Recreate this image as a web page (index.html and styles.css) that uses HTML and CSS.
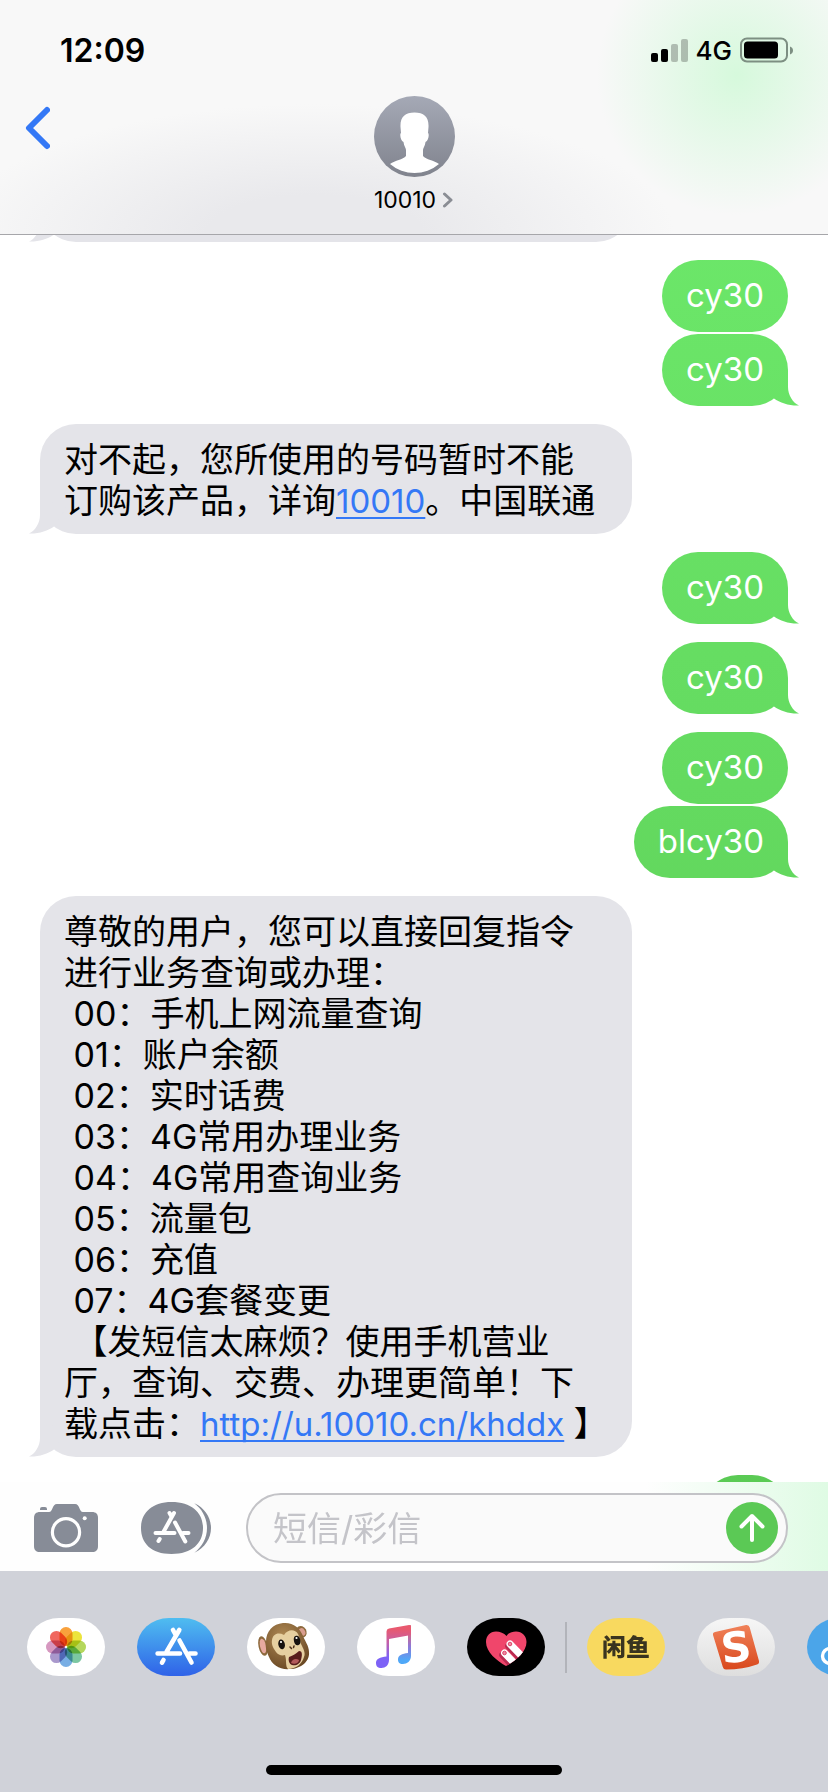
FILE: index.html
```html
<!DOCTYPE html>
<html lang="zh-CN">
<head>
<meta charset="utf-8">
<meta name="viewport" content="width=device-width, initial-scale=1">
<title>10010</title>
<link rel="stylesheet" href="styles.css">
</head>
<body>
<div class="screen">
  <header class="header">
    <div class="status">
      <time class="clock">12:09</time>
      <div class="status-icons">
        <svg class="signal" width="37" height="24" viewBox="0 0 37 24" role="img" aria-label="信号">
          <rect x="0" y="15" width="7" height="9" rx="2"/>
          <rect x="10" y="11" width="7" height="13" rx="2"/>
          <rect x="20" y="6" width="7" height="18" rx="2" opacity=".24"/>
          <rect x="30" y="1" width="7" height="23" rx="2" opacity=".24"/>
        </svg>
        <span class="network">4G</span>
        <svg class="battery" width="54" height="26" viewBox="0 0 54 26" role="img" aria-label="电池">
          <rect x="1" y="1.5" width="46" height="23" rx="6" fill="none" stroke="#7d8f82" stroke-width="2"/>
          <rect x="4" y="4.500" width="34" height="17" rx="3.500"/>
          <path d="M50 9.500c4 1.200 4 6.800 0 8z" fill="#7d8f82"/>
        </svg>
      </div>
    </div>
    <nav class="nav">
      <button class="back" type="button" aria-label="返回">
        <svg width="26" height="44" viewBox="0 0 26 44"><path d="M23 4 5 22l18 18" fill="none" stroke="#3478f6" stroke-width="6" stroke-linecap="round" stroke-linejoin="round"/></svg>
      </button>
      <button class="contact" type="button">
        <svg class="avatar" width="81" height="81" viewBox="0 0 81 81" aria-hidden="true">
          <defs><linearGradient id="av" x1="0" y1="0" x2="0" y2="1"><stop offset="0" stop-color="#a5a9b6"/><stop offset="1" stop-color="#80838d"/></linearGradient></defs>
          <circle cx="40.500" cy="40.500" r="40.500" fill="url(#av)"/>
          <path fill="#fff" d="M40.500 16.500C31 16.500 26 21 26.500 31l.5 6c-1.500 1-.5 7.500 2.500 9 .4 4 2.500 6 2.500 8v6c-3 3.500-11 4.500-16 8a37.500 37.500 0 0 0 49 0c-5-3.500-13-4.500-16-8v-6c0-2 2.100-4 2.500-8 3-1.500 4-8 2.500-9l.5-6c.5-10-4.500-14.500-14-14.500z"/>
        </svg>
        <span class="contact-name">10010
          <svg width="12" height="16" viewBox="0 0 12 16" aria-hidden="true"><path d="m2.500 2 6.500 6-6.500 6" fill="none" stroke="#8a8d94" stroke-width="3" stroke-linecap="round" stroke-linejoin="round"/></svg>
        </span>
      </button>
    </nav>
  </header>

  <main class="thread">
    <div class="msg msg-in msg-tail msg-earlier" aria-hidden="true"></div>
    <p class="msg msg-out group-start">cy30</p>
    <p class="msg msg-out msg-tail">cy30</p>
    <p class="msg msg-in msg-tail group-start">对不起，您所使用的号码暂时不能
订购该产品，详询<a href="tel:10010">10010</a>。中国联通</p>
    <p class="msg msg-out msg-tail group-start">cy30</p>
    <p class="msg msg-out msg-tail group-start">cy30</p>
    <p class="msg msg-out group-start">cy30</p>
    <p class="msg msg-out msg-tail">blcy30</p>
    <p class="msg msg-in msg-tail group-start">尊敬的用户，您可以直接回复指令
进行业务查询或办理：
 00：手机上网流量查询
 01：账户余额
 02：实时话费
 03：4G常用办理业务
 04：4G常用查询业务
 05：流量包
 06：充值
 07：4G套餐变更
 【发短信太麻烦？使用手机营业
厅，查询、交费、办理更简单！下
载点击：<a href="http://u.10010.cn/khddx">http://u.10010.cn/khddx</a> 】</p>
    <div class="msg msg-out group-start msg-later" aria-hidden="true"></div>
  </main>

  <footer class="footer">
    <form class="composer">
      <button class="tool" type="button" aria-label="相机">
        <svg width="64" height="48" viewBox="0 0 64 48"><path fill="#878c97" d="M6 6V5q0-2 2-2h3q2 0 2 2v1zM6 8h9c4 0 3-8 8-8h18c5 0 4 8 8 8h9c4 0 6 2 6 6v28c0 4-2 6-6 6H6c-4 0-6-2-6-6V14c0-4 2-6 6-6z"/><circle cx="32" cy="28.300" r="13.600" fill="none" stroke="#fff" stroke-width="3.200"/><circle cx="50.700" cy="14.300" r="2" fill="#fff"/></svg>
      </button>
      <button class="tool tool-apps" type="button" aria-label="应用">
        <svg width="70" height="52" viewBox="0 0 70 52"><path fill="#878c97" d="M30.500 0C51 0 62 11 62 26S51 52 30.500 52 0 41 0 26 11 0 30.500 0zM53.300 1.300C64 6 70 16 70 26S64 46 53.300 50.700C61 45 66 36 66 26S61 7 53.300 1.300z"/><path fill="none" stroke="#fff" stroke-width="4" stroke-linecap="round" d="M14.500 31h19M42 31h5.500M33 11 22.700 29.500M28.500 11l2 3.500M34 20.500l10.300 19M18.700 37l-1.200 2"/></svg>
      </button>
      <div class="field">
        <input class="input" type="text" placeholder="短信/彩信" aria-label="短信/彩信">
        <button class="send" type="submit" aria-label="发送">
          <svg width="52" height="52" viewBox="0 0 52 52"><path d="M26 38V14M15.500 24.500 26 14l10.500 10.500" fill="none" stroke="#fff" stroke-width="4" stroke-linecap="round" stroke-linejoin="round"/></svg>
        </button>
      </div>
    </form>

    <div class="apps">
      <button class="app" type="button" aria-label="照片">
        <svg width="78" height="58" viewBox="0 0 78 58"><g class="petals" transform="translate(39 29)">
          <rect x="-6.500" y="-20" width="13" height="19" rx="6.500" fill="#f9a13c"/>
          <rect x="-6.500" y="-20" width="13" height="19" rx="6.500" fill="#ece43c" transform="rotate(45)"/>
          <rect x="-6.500" y="-20" width="13" height="19" rx="6.500" fill="#b4d75c" transform="rotate(90)"/>
          <rect x="-6.500" y="-20" width="13" height="19" rx="6.500" fill="#7cc7a2" transform="rotate(135)"/>
          <rect x="-6.500" y="-20" width="13" height="19" rx="6.500" fill="#78aee4" transform="rotate(180)"/>
          <rect x="-6.500" y="-20" width="13" height="19" rx="6.500" fill="#a998cc" transform="rotate(225)"/>
          <rect x="-6.500" y="-20" width="13" height="19" rx="6.500" fill="#d698c0" transform="rotate(270)"/>
          <rect x="-6.500" y="-20" width="13" height="19" rx="6.500" fill="#f0675f" transform="rotate(315)"/>
        </g></svg>
      </button>
      <button class="app app-store" type="button" aria-label="App Store">
        <svg width="78" height="58" viewBox="0 0 78 58"><path fill="none" stroke="#fff" stroke-width="4.600" stroke-linecap="round" d="M20.600 35.500H43M52.500 35.500h6M42.300 12 29.500 34M36 12l2.500 4.500M42.500 22.500l12 22M26.500 42l-1.500 2.700"/></svg>
      </button>
      <button class="app" type="button" aria-label="拟我表情">
        <svg width="78" height="58" viewBox="0 0 78 58">
          <defs><radialGradient id="fur" cx=".4" cy=".3" r=".75"><stop offset="0" stop-color="#b08a55"/><stop offset="1" stop-color="#694723"/></radialGradient></defs>
          <ellipse cx="16" cy="28" rx="4.500" ry="10" transform="rotate(-12 16 28)" fill="#8d6a3d"/>
          <ellipse cx="16" cy="28" rx="3" ry="7.500" transform="rotate(-12 16 28)" fill="#e7aaa0"/>
          <ellipse cx="54.500" cy="14" rx="5" ry="6" transform="rotate(-30 54 14)" fill="#8d6a3d"/>
          <ellipse cx="55" cy="14.500" rx="3" ry="4" transform="rotate(-30 54 14)" fill="#d99d8e"/>
          <path fill="url(#fur)" d="M36 5c10-1 17 5 20 13 2 5 6 10 6 16 1 9-8 17-19 17-10 1-18-4-21-12-2-5-4-9-3-15C19 13 26 6 36 5z"/>
          <path fill="#e6cfa0" d="M25 22c1-6 6-8 12-5 4-6 11-6 14-1 2 4 2 7 3 10 2 4 5 9 3 13-2 7-8 12-16 12-3-3-1-8-3-14-3 1-7 0-9-3-2-3-5-7-4-12z"/>
          <ellipse cx="34.500" cy="26.500" rx="3.300" ry="5" transform="rotate(-12 34 26)" fill="#17120f"/>
          <ellipse cx="50" cy="22.500" rx="3.200" ry="4.800" transform="rotate(-12 50 22)" fill="#17120f"/>
          <circle cx="34" cy="24" r="1.100" fill="#fff"/><circle cx="49.500" cy="20" r="1.100" fill="#fff"/>
          <path d="m43 29 1.500 1.500M47 28l-.5 1.500" stroke="#4a2c17" stroke-width="1.500" stroke-linecap="round"/>
          <path fill="#571d1c" d="M42 39c3-1 7-3 10-6 4 0 3 5 2 9-1 4-5 6-9 5-3-1-4-5-3-8z"/>
          <path fill="#b25a5b" d="M44 45c1-4 5-5 8-3 0 3-5 5-8 3z"/>
        </svg>
      </button>
      <button class="app" type="button" aria-label="音乐">
        <svg width="78" height="58" viewBox="0 0 78 58">
          <defs><linearGradient id="nl" x1="0" y1="7" x2="0" y2="50" gradientUnits="userSpaceOnUse"><stop offset=".1" stop-color="#e8596f"/><stop offset=".4" stop-color="#c45fa8"/><stop offset=".75" stop-color="#7d62f6"/></linearGradient>
          <linearGradient id="nr" x1="0" y1="7" x2="0" y2="46" gradientUnits="userSpaceOnUse"><stop offset=".2" stop-color="#d9647f"/><stop offset=".55" stop-color="#8d78d8"/><stop offset=".9" stop-color="#4fa8f8"/></linearGradient></defs>
          <path fill="url(#nr)" d="M51 8.500 54 7v31c0 5-4 8-8 8s-5-2-5-4.500c0-4 4-6 10-6.500z"/>
          <path fill="url(#nl)" d="M29.500 13.500q0-2.500 2.500-3L52 7q2-.3 2 1.500V17l-22 4v21c0 5-3.500 8-7.500 8S19 48 19 45c0-4 4-6 10.500-6.500z"/>
        </svg>
      </button>
      <button class="app app-touch" type="button" aria-label="Digital Touch">
        <svg width="78" height="58" viewBox="0 0 78 58">
          <defs><clipPath id="heart"><path d="M39 48C30 43 19 34 19 24c0-6 4-10.500 10-10.500 4 0 8 1.500 10.500 4.500 2-3 5.500-4.500 9.500-4.500 6 0 10.500 4.500 10.500 10.500 0 10-11 19-20.500 24z"/></clipPath></defs>
          <g clip-path="url(#heart)"><path fill="#f0466b" d="M0 0h78v58H0z"/>
          <path d="M42 28 58 45M36 37l16 17" stroke="#b92b50" stroke-width="7.500" stroke-linecap="round"/>
          <path d="m43 26 16 16.500M37.500 35l16 16.500" stroke="#fff" stroke-width="7" stroke-linecap="round"/></g>
          <circle cx="43" cy="26" r="1.800" fill="#ef8da3" stroke="#dd4469"/><circle cx="37.500" cy="35" r="1.800" fill="#ef8da3" stroke="#dd4469"/>
        </svg>
      </button>
      <span class="divider"></span>
      <button class="app app-fish" type="button">闲鱼</button>
      <button class="app app-sogou" type="button" aria-label="搜狗">
        <svg width="78" height="58" viewBox="0 0 78 58">
          <defs><linearGradient id="sg" x1="0" y1="0" x2="0" y2="1"><stop offset="0" stop-color="#f0825a"/><stop offset="1" stop-color="#d9481c"/></linearGradient></defs>
          <path fill="url(#sg)" d="M18 14 49 7q3-.5 3.700 2.500L62 43q.5 2.500-2 3.500-14 5-31 5-2.500 0-3.200-2.500L16 17q-.5-2.500 2-3z"/>
          <text class="sogou-mark" x="39" y="44" text-anchor="middle" transform="rotate(-6 39 29)" fill="#fff">S</text>
        </svg>
      </button>
      <button class="app app-cloud" type="button" aria-label="网盘">
        <svg width="78" height="58" viewBox="0 0 78 58"><circle cx="23" cy="38" r="7.500" fill="none" stroke="#fff" stroke-width="3.400"/></svg>
      </button>
    </div>
    <div class="home"></div>
  </footer>
</div>
</body>
</html>
```
FILE: styles.css
```css
* {
  box-sizing: border-box;
}

body {
  margin: 0;
  background: #fff;
  color: #000;
  font-family: Inter, "Noto Sans CJK SC", sans-serif;
  font-size: 34px;
  line-height: 41px;
}

button {
  padding: 0;
  border: 0;
  background: none;
  color: inherit;
  font: inherit;
}

svg {
  display: block;
}

.screen {
  display: grid;
  grid-template-columns: minmax(0, 1fr);
  grid-template-rows: auto minmax(0, 1fr) auto;
  height: 100vh;
  overflow: hidden;
}

/* Header */
.header {
  position: relative;
  z-index: 1;
  border-bottom: 1px solid #a6a6aa;
  background:
    radial-gradient(circle 140px at 89% 75px, #d6f9dc, #d6f9dc00),
    radial-gradient(ellipse 360px 130px at 38% 100%, #e9e9ecff 30%, #e9e9ec00),
    #f8f8f8;
}

.status {
  display: flex;
  align-items: center;
  justify-content: space-between;
  height: 96px;
  padding: 4px 34px 0 60px;
}

.clock {
  font-size: 32px;
  font-weight: 600;
}

.status-icons {
  display: flex;
  align-items: center;
  gap: 8px;
}

.network {
  font-size: 26px;
  font-weight: 500;
}

.nav {
  display: grid;
  grid-template-columns: 1fr auto 1fr;
  align-items: start;
  padding-bottom: 19px;
}

.back {
  justify-self: start;
  padding: 10px 24px;
}

.contact {
  display: flex;
  flex-direction: column;
  align-items: center;
  gap: 8px;
}

.contact-name {
  display: flex;
  align-items: center;
  gap: 6px;
  font-size: 23px;
  line-height: 30px;
}

/* Conversation */
.thread {
  display: flex;
  flex-direction: column;
  gap: 2px;
  padding: 0 40px;
  overflow: hidden;
}

.msg {
  position: relative;
  flex: none;
  max-width: 592px;
  margin: 0;
  border-radius: 36px;
  white-space: pre-wrap;
}

.msg-in {
  align-self: flex-start;
  width: 592px;
  padding: 15px 16px 13px 24px;
  background: #e4e4e9;
}

.msg-out {
  align-self: flex-end;
  padding: 15px 24px 16px;
  background: linear-gradient(#6fec6d, #56c34f) fixed;
  color: #fff;
  font-size: 33px;
}

.group-start {
  margin-top: 16px;
}

.msg-tail::after {
  content: "";
  position: absolute;
  right: -12px;
  bottom: 0;
  width: 48px;
  height: 36px;
  background: inherit;
  clip-path: path("M36 0V17C36 25 41 33 47 35.500C38 36 28 33 22 28.500L10 10Z");
}

.msg-in.msg-tail::after {
  right: auto;
  left: -12px;
  transform: scaleX(-1);
}

.msg-earlier {
  height: 110px;
  margin-top: -103px;
}

.msg-later {
  width: 86px;
  height: 72px;
}

.msg a {
  color: #3478f6;
  font-size: 33px;
  line-height: 1;
  text-decoration-thickness: 2px;
  text-underline-offset: 4px;
  text-decoration-skip-ink: none;
}

/* Composer */
.footer {
  background: #d0d2d9;
}

.composer {
  display: flex;
  align-items: center;
  gap: 43px;
  padding: 11px 40px 8px 34px;
  background: linear-gradient(90deg, #fefefe 78%, #dffbe4);
}

.field {
  display: flex;
  flex: 1;
  align-items: center;
  min-width: 0;
  height: 70px;
  margin-left: -8px;
  padding: 0 8px 0 25px;
  border: 2px solid #c3c3c7;
  border-radius: 35px;
  background: #fafafa;
}

.input {
  flex: 1;
  min-width: 0;
  padding: 0;
  border: 0;
  outline: 0;
  background: none;
  font: inherit;
}

.input::placeholder {
  color: #c4c4c9;
  opacity: 1;
}

.send {
  border-radius: 50%;
  background: #5bc955;
}

/* App strip */
.apps {
  display: flex;
  align-items: center;
  gap: 32px;
  padding: 47px 0 0 27px;
  overflow: hidden;
}

.app {
  flex: none;
  width: 78px;
  height: 58px;
  border-radius: 32px / 29px;
  background: #fff;
  overflow: hidden;
}

.petals rect {
  mix-blend-mode: multiply;
}

.app-store {
  background: linear-gradient(#4fbdf0, #2f62e8);
}

.app-touch {
  background: #000;
}

.app-fish {
  background: #f8d95f;
  color: #3a341f;
  font-size: 24px;
  font-weight: 900;
}

.app-sogou {
  background: linear-gradient(#f6f6f6, #dedede);
}

.sogou-mark {
  font: bold 42px "DejaVu Sans", sans-serif;
}

.app-cloud {
  background: #4ba5e9;
}

.divider {
  flex: none;
  width: 2px;
  height: 51px;
  margin: 0 -12px;
  background: #b2b4ba;
}

.home {
  width: 296px;
  height: 10px;
  margin: 89px auto 17px;
  border-radius: 5px;
  background: #000;
}
```
